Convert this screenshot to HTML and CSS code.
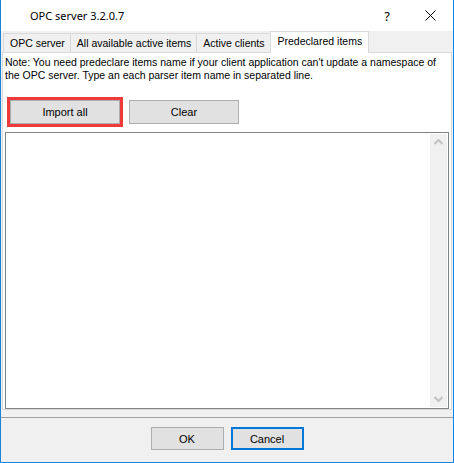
FILE: index.html
```html
<!DOCTYPE html>
<html lang="en">
<head>
    <meta charset="UTF-8">
    <title>OPC server 3.2.0.7</title>
    <link rel="stylesheet" href="styles.css">
</head>
<body>
    <div class="window">
        <div class="titlebar">
            <span class="title">OPC server 3.2.0.7</span>
            <span class="help">?</span>
            <svg class="close" width="11" height="11" viewBox="0 0 11 11">
                <path d="M0.5 0.5 L10.5 10.5 M10.5 0.5 L0.5 10.5" stroke="#000" stroke-width="1" fill="none"/>
            </svg>
        </div>

        <div class="client">
            <div class="tabs">
                <div class="tab">OPC server</div>
                <div class="tab">All available active items</div>
                <div class="tab">Active clients</div>
                <div class="tab active">Predeclared items</div>
            </div>

            <div class="page">
                <p class="note">Note: You need predeclare items name if your client application can't update a namespace of the OPC server. Type an each parser item name in separated line.</p>

                <div class="button-row">
                    <div class="highlight">
                        <button type="button" class="btn">Import all</button>
                    </div>
                    <button type="button" class="btn">Clear</button>
                </div>

                <div class="memo">
                    <div class="memo-text"></div>
                    <div class="scrollbar">
                        <svg width="9" height="6" viewBox="0 0 9 6">
                            <path d="M0.5 5 L4.5 1 L8.5 5" stroke="#c2c2c2" stroke-width="2" fill="none"/>
                        </svg>
                        <svg width="9" height="6" viewBox="0 0 9 6">
                            <path d="M0.5 1 L4.5 5 L8.5 1" stroke="#c2c2c2" stroke-width="2" fill="none"/>
                        </svg>
                    </div>
                </div>
            </div>

            <div class="footer">
                <button type="button" class="btn small">OK</button>
                <button type="button" class="btn small default">Cancel</button>
            </div>
        </div>
    </div>
</body>
</html>
```

FILE: styles.css
```css
body {
    margin: 0;
    font-family: "Liberation Sans", Arial, sans-serif;
    font-size: 10.5px;
    color: #000;
}
.window {
    width: 452px;
    height: 462px;
    border: 1px solid #1883d7;
    border-top: none;
    display: flex;
    flex-direction: column;
    background-color: #f0f0f0;
}
.titlebar {
    height: 31px;
    background-color: #fff;
    display: flex;
    align-items: center;
    flex-shrink: 0;
}
.title {
    font-family: "Noto Sans", sans-serif;
    font-size: 11px;
    margin-left: 29px;
    flex: 1;
}
.help {
    font-family: "Noto Sans", sans-serif;
    font-size: 13px;
    margin-right: 35px;
}
.close {
    margin-right: 17px;
}
.client {
    flex: 1;
    display: flex;
    flex-direction: column;
}
.tabs {
    display: flex;
    align-items: flex-end;
    height: 21px;
    padding-left: 2px;
    position: relative;
    z-index: 1;
}
.tab {
    height: 19px;
    line-height: 19px;
    padding: 0 5px 0 6px;
    border: 1px solid #d9d9d9;
    border-bottom: none;
    border-left: none;
    background-color: #f0f0f0;
    white-space: nowrap;
    box-sizing: border-box;
}
.tab:first-child {
    border-left: 1px solid #d9d9d9;
}
.tab.active {
    height: 22px;
    line-height: 19px;
    background-color: #fff;
    padding: 0 6px 0 7px;
    border-left: 1px solid #d9d9d9;
    margin-left: -1px;
    margin-bottom: -1px;
}
.page {
    background-color: #fff;
    border: 1px solid #d9d9d9;
    margin: 0 1px 0 1px;
    height: 358px;
    padding: 3px 2px 0 2px;
    display: flex;
    flex-direction: column;
    box-sizing: border-box;
}
.note {
    margin: 0;
    line-height: 13px;
}
.button-row {
    display: flex;
    align-items: center;
    margin-top: 15px;
    gap: 6px;
}
.highlight {
    border: 3px solid #ee3a3a;
    margin-left: 2px;
}
.btn {
    font-family: "Liberation Sans", Arial, sans-serif;
    font-size: 11px;
    width: 110px;
    height: 24px;
    background-color: #e1e1e1;
    border: 1px solid #adadad;
    padding: 0;
    display: block;
    color: #000;
}
.memo {
    margin-top: 5px;
    height: 276px;
    border: 1px solid #828282;
    display: flex;
    padding: 1px;
}
.memo-text {
    flex: 1;
}
.scrollbar {
    width: 17px;
    background-color: #f0f0f0;
    display: flex;
    flex-direction: column;
    justify-content: space-between;
    align-items: center;
    padding: 5px 0 5px 0;
}
.footer {
    margin-top: 7px;
    border-top: 1px solid #a0a0a0;
    flex: 1;
    display: flex;
    justify-content: center;
    align-items: flex-start;
    padding-top: 9px;
    gap: 7px;
}
.btn.small {
    width: 73px;
    height: 23px;
}
.btn.default {
    border: 2px solid #0078d7;
}
```
